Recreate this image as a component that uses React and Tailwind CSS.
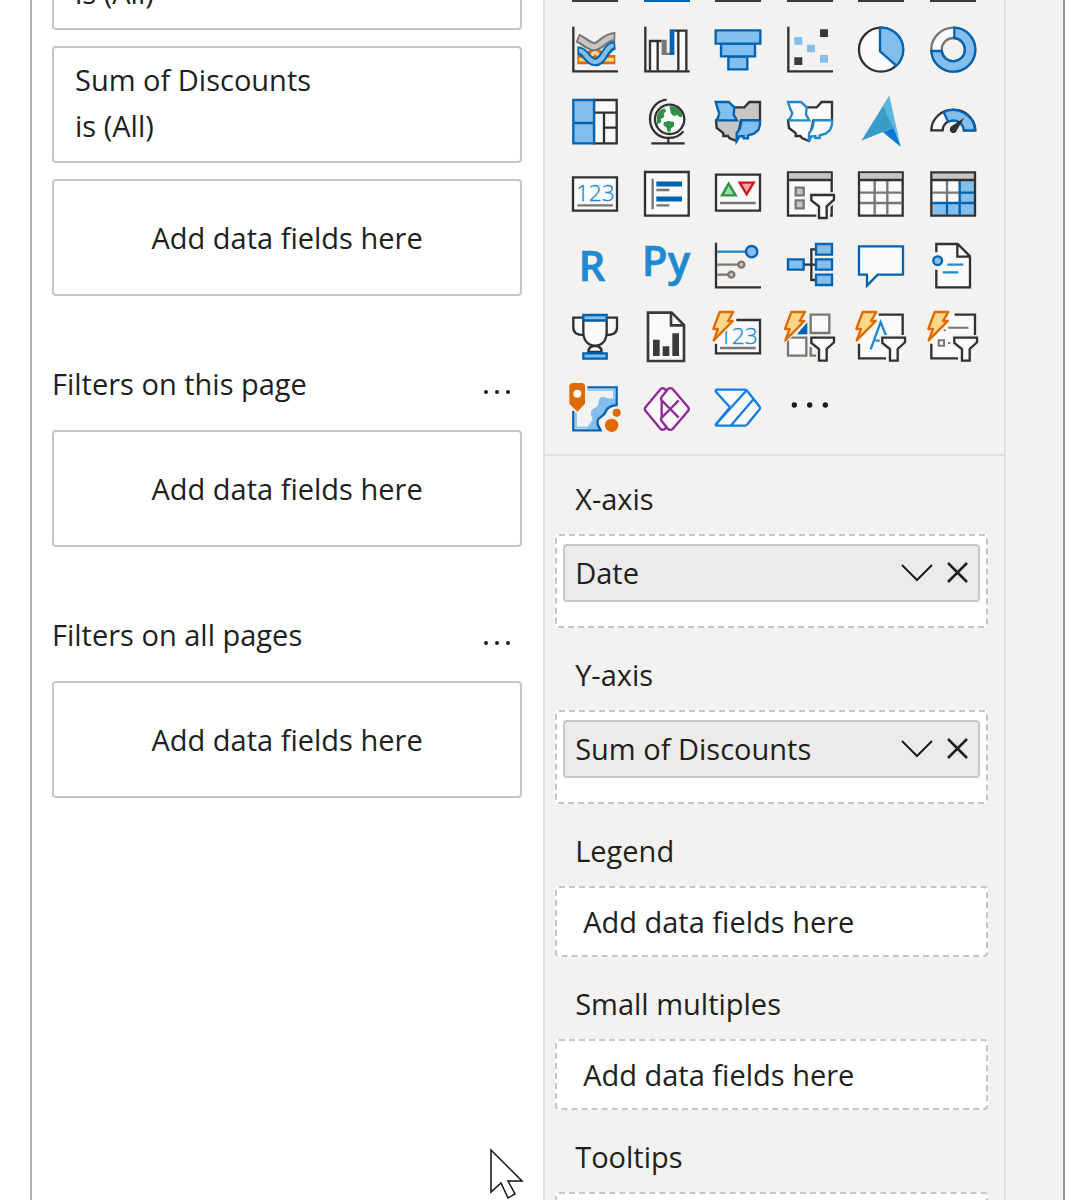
import React from 'react';

const INK = '#323130';
const BLUE = '#0063b1';
const SKY = '#83beec';
const PAPER = '#fafafa';
const GRAY = '#797673';
const SILVER = '#c8c6c4';
const AZURE = '#1f8ad0';

function Icon({ x, y, children }) {
  return (
    <svg viewBox={`${x} ${y} 162 162`} className="block size-[54px] overflow-visible" fill="none" strokeWidth="7" aria-hidden="true">
      {children}
    </svg>
  );
}

function Funnel({ x, y }) {
  return (
    <g transform={`translate(${x} ${y})`}>
      <path d="M4 4H72V18L52 38V73H27V38L4 20Z" fill={PAPER} stroke="#f3f2f1" strokeWidth="16" />
      <path d="M4 4H72V18L50 38V73H27V38L4 20Z" fill={PAPER} stroke={INK} />
    </g>
  );
}

function Bolt({ x, y }) {
  return (
    <g transform={`translate(${x} ${y})`} strokeLinejoin="round">
      <path d="M22 3H63L47 30H61L4 88L17 54H3Z" stroke="#f3f2f1" strokeWidth="14" />
      <path d="M22 3H63L47 30H61L4 88L17 54H3Z" fill="#fbd98a" stroke="#dd6b00" strokeWidth="7" />
    </g>
  );
}

const visuals = [
  {
    name: 'Ribbon chart',
    icon: (
      <Icon x={26} y={71}>
        <path d="M54 181H80L107 156L136 181H168" stroke="#dd6b00" strokeWidth="28" />
        <path d="M59 181H80L107 158L136 181H163" stroke="#fbd98a" strokeWidth="11" />
        <path d="M54 116C74 124 88 142 105 142C124 142 138 111 168 112" stroke={GRAY} strokeWidth="28" />
        <path d="M59 118C74 124 88 142 105 142C124 142 138 112 163 112" stroke={SILVER} strokeWidth="15" />
        <path d="M54 154C80 154 84 188 108 188C134 188 138 140 168 138" stroke={BLUE} strokeWidth="26" />
        <path d="M59 154C80 154 84 188 108 188C134 188 138 140 163 138" stroke={SKY} strokeWidth="13" />
        <path d="M42 82V216H176" stroke={INK} />
      </Icon>
    ),
  },
  {
    name: 'Waterfall chart',
    icon: (
      <Icon x={241} y={71}>
        <path d="M271 125H294V214H271ZM356 94H380V214H356Z" fill={PAPER} />
        <path d="M271 214V125H306M294 125V214M344 94H380V214M356 94V214" stroke={INK} />
        <path d="M306 121H321V160H331V167H306Z" fill={GRAY} />
        <path d="M330 90H344V167H330Z" fill={BLUE} />
        <path d="M257 82V216H390" stroke={INK} />
      </Icon>
    ),
  },
  {
    name: 'Funnel chart',
    icon: (
      <Icon x={455} y={71}>
        <g fill={SKY} stroke={BLUE}>
          <path d="M507 172H564V210H507Z" />
          <path d="M485 133H587V171H485Z" />
          <path d="M469 93H603V133H469Z" />
        </g>
      </Icon>
    ),
  },
  {
    name: 'Scatter chart',
    icon: (
      <Icon x={24} y={71}>
        <path d="M135 90h24v23h-24ZM58 174h24v23h-24Z" fill="#3b3a39" />
        <path d="M58 113h24v23h-24ZM96 136h24v23h-24ZM135 167h24v23h-24Z" fill={SKY} />
        <path d="M40 82V216H174" stroke={INK} />
      </Icon>
    ),
  },
  {
    name: 'Pie chart',
    icon: (
      <Icon x={238} y={71}>
        <circle cx="319" cy="151" r="66" fill={PAPER} stroke={INK} />
        <path d="M316 85A66 66 0 0 1 365 199L316 156Z" fill={SKY} stroke={BLUE} />
      </Icon>
    ),
  },
  {
    name: 'Donut chart',
    icon: (
      <Icon x={452} y={71}>
        <circle cx="534" cy="151" r="49" stroke={PAPER} strokeWidth="34" />
        <circle cx="534" cy="151" r="66" stroke={GRAY} />
        <circle cx="534" cy="151" r="35" stroke={GRAY} />
        <path d="M537 85A66 66 0 1 1 468 155H499A35 35 0 1 0 537 116Z" fill={SKY} stroke={BLUE} />
      </Icon>
    ),
  },
  {
    name: 'Treemap',
    icon: (
      <Icon x={26} y={286}>
        <path d="M104 301H172V431H104Z" fill={PAPER} stroke={INK} />
        <path d="M104 339H172M134 339V431M134 384H172" stroke={INK} />
        <path d="M42 301H104V431H42ZM42 370H104" fill={SKY} stroke={BLUE} />
      </Icon>
    ),
  },
  {
    name: 'Map',
    icon: (
      <Icon x={241} y={286}>
        <circle cx="330" cy="359" r="44" fill={PAPER} />
        <path d="M329 320C345 318 358 326 367 340V352H360L352 345C344 352 336 348 333 338ZM292 348C296 336 303 329 314 326L320 334L312 342L314 352L303 358L305 368L292 374ZM313 368L326 364L343 367V380L334 386L332 396H324L321 384L311 376Z" fill="#2d9148" />
        <circle cx="330" cy="359" r="44" stroke={INK} />
        <path d="M321 300C292 303 271 326 271 358C271 391 295 415 326 415C347 415 362 407 371 395M326 415V430M275 431H375" stroke={INK} />
      </Icon>
    ),
  },
  {
    name: 'Filled map',
    icon: (
      <Icon x={455} y={286}>
        <path d="M520 323H555L570 307H602V362H545L532 424L511 416L506 409H492V400L472 385L470 362Z" fill={SILVER} stroke={INK} />
        <path d="M469 307H508L525 323L523 345L533 362H473L480 341L475 328Z" fill={SKY} stroke={BLUE} />
        <path d="M547 362H602V375L597 391L584 402L566 407V416H553V409L540 410L532 424V401L542 386Z" fill={SKY} stroke={BLUE} />
      </Icon>
    ),
  },
  {
    name: 'Shape map',
    icon: (
      <Icon x={24} y={286}>
        <path d="M92 323H125L140 307H171V362H115L102 424L82 416L76 409H62V400L42 385L39 362Z" fill={PAPER} stroke={INK} />
        <path d="M39 307H78L95 323L93 345L103 362H43L52 341L46 328Z" fill={PAPER} stroke={AZURE} />
        <path d="M117 362H171V375L165 391L152 402L134 407V415H121V409L109 410L102 424V401L112 386Z" fill={PAPER} stroke={AZURE} />
      </Icon>
    ),
  },
  {
    name: 'Azure map',
    icon: (
      <Icon x={238} y={286}>
        <path d="M344 288L260 423L325 397Z" fill="#3a9bc9" />
        <path d="M344 288L378 441L325 320Z" fill="#5cb8dc" />
        <path d="M325 320L356 385L325 398Z" fill="#3a9bc9" />
        <path d="M325 398L356 385L378 441Z" fill="#0078d4" />
      </Icon>
    ),
  },
  {
    name: 'Gauge',
    icon: (
      <Icon x={452} y={286}>
        <path d="M468 392A66 62 0 0 1 600 392H566A32 30 0 0 0 502 392Z" fill={PAPER} stroke={INK} />
        <path d="M505 337A66 62 0 0 1 599 392H566C564 376 552 362 534 362C528 362 523 363 518 366Z" fill={SKY} stroke={BLUE} />
        <path d="M567 354L545 391A11 11 0 1 1 528 380Z" fill={INK} />
      </Icon>
    ),
  },
  {
    name: 'Card',
    icon: (
      <Icon x={26} y={49}>
        <path d="M41 80H173V180H41Z" fill={PAPER} stroke={INK} />
        <text x="108" y="152" textAnchor="middle" fontSize="68" fontFamily="'Open Sans', sans-serif" fontWeight="300" fill={AZURE} stroke={AZURE} strokeWidth="1">123</text>
        <path d="M54 164H161" stroke={GRAY} />
      </Icon>
    ),
  },
  {
    name: 'Multi-row card',
    icon: (
      <Icon x={241} y={49}>
        <path d="M256 64H387V195H256Z" fill={PAPER} stroke={INK} />
        <path d="M279 84V176M290 118H329M290 164H329" stroke={GRAY} />
        <path d="M290 100H367M290 145H367" stroke={BLUE} strokeWidth="15" />
      </Icon>
    ),
  },
  {
    name: 'KPI',
    icon: (
      <Icon x={455} y={49}>
        <path d="M470 72H602V180H470Z" fill={PAPER} stroke={INK} />
        <path d="M508 99L529 134H488Z" fill="#a1dba8" stroke="#2d9148" />
        <path d="M541 96H583L562 131Z" fill="#f5a3a5" stroke="#d1141b" />
        <path d="M482 157H589" stroke={GRAY} />
      </Icon>
    ),
  },
  {
    name: 'Slicer',
    icon: (
      <Icon x={24} y={49}>
        <path d="M39 65H170V195H39Z" fill={PAPER} stroke={INK} />
        <path d="M42 68H167V85H42Z" fill={SILVER} />
        <path d="M39 88H170" stroke={INK} />
        <path d="M62 111H86V134H62ZM62 149H86V173H62Z" fill={SILVER} stroke={GRAY} />
        <Funnel x={105} y={129} />
      </Icon>
    ),
  },
  {
    name: 'Table',
    icon: (
      <Icon x={238} y={49}>
        <path d="M253 65H384V195H253Z" fill={PAPER} stroke={INK} />
        <path d="M256 68H381V85H256Z" fill={SILVER} />
        <path d="M300 88V192M338 88V192M256 126H381M256 157H381" stroke={GRAY} />
        <path d="M253 88H384" stroke={INK} />
      </Icon>
    ),
  },
  {
    name: 'Matrix',
    icon: (
      <Icon x={452} y={49}>
        <path d="M468 65H599V195H468Z" fill={PAPER} />
        <path d="M471 68H596V85H471Z" fill={SILVER} />
        <path d="M553 90H596V192H471V160H553Z" fill={SKY} />
        <path d="M515 88V157M471 126H553" stroke={GRAY} />
        <path d="M553 88V192M515 157V192M471 157H596M553 126H596" stroke={BLUE} />
        <path d="M468 65H599V195H468ZM468 88H599" stroke={INK} />
      </Icon>
    ),
  },
  {
    name: 'R script visual',
    icon: (
      <Icon x={26} y={264}>
        <text x="98" y="389" textAnchor="middle" fontSize="126" fontFamily="'Open Sans', sans-serif" fontWeight="600" fill={AZURE} stroke={AZURE} strokeWidth="2">R</text>
      </Icon>
    ),
  },
  {
    name: 'Python visual',
    icon: (
      <Icon x={241} y={264}>
        <text x="319" y="375" textAnchor="middle" fontSize="126" fontFamily="'Open Sans', sans-serif" fontWeight="600" fill={AZURE} stroke={AZURE} strokeWidth="2">Py</text>
      </Icon>
    ),
  },
  {
    name: 'Key influencers',
    icon: (
      <Icon x={455} y={264}>
        <path d="M474 341H540M474 371H510" stroke={GRAY} />
        <path d="M474 302H562" stroke={AZURE} />
        <circle cx="577" cy="302" r="17" fill={SKY} stroke={BLUE} />
        <circle cx="546" cy="341" r="9" fill={SILVER} stroke={GRAY} />
        <circle cx="516" cy="371" r="9" fill={SILVER} stroke={GRAY} />
        <path d="M470 275V409H605" stroke={INK} />
      </Icon>
    ),
  },
  {
    name: 'Decomposition tree',
    icon: (
      <Icon x={24} y={264}>
        <path d="M88 341H124M124 295H109V387H124" stroke={INK} />
        <path d="M39 325H86V356H39ZM123 279H171V311H123ZM123 325H171V356H123ZM123 371H171V402H123Z" fill={SKY} stroke={BLUE} />
      </Icon>
    ),
  },
  {
    name: 'Q&A',
    icon: (
      <Icon x={238} y={264}>
        <path d="M253 286H385V371H309L277 404V371H253Z" fill={PAPER} stroke={BLUE} />
      </Icon>
    ),
  },
  {
    name: 'Smart narrative',
    icon: (
      <Icon x={452} y={264}>
        <path d="M483 279H547L584 316V409H483Z" fill={PAPER} />
        <path d="M483 304V279H547L584 316V409H483V356M546 279V317H584" stroke={INK} />
        <circle cx="487" cy="329" r="22" fill="#f3f2f1" />
        <circle cx="487" cy="329" r="13" fill={SKY} stroke={BLUE} />
        <path d="M516 341H564M502 364H549" stroke={AZURE} />
      </Icon>
    ),
  },
  {
    name: 'Metrics',
    icon: (
      <Icon x={26} y={29}>
        <path d="M87 155C87 142 94 137 107 137C120 137 127 142 127 155Z" fill={PAPER} stroke={INK} />
        <path d="M72 52H42V82C42 96 52 104 74 104M143 52H173V82C173 96 162 104 140 104" fill={PAPER} stroke={INK} />
        <path d="M72 60V96C72 122 88 136 107 136C127 136 142 122 142 96V60Z" fill={PAPER} stroke={INK} />
        <path d="M72 44H142V60H72ZM72 159H142V175H72Z" fill={SKY} stroke={BLUE} />
      </Icon>
    ),
  },
  {
    name: 'Paginated report',
    icon: (
      <Icon x={241} y={29}>
        <path d="M265 37H336L373 74V182H265Z" fill={PAPER} stroke="#3b3a39" strokeWidth="8" />
        <path d="M334 37V75H373" stroke="#3b3a39" strokeWidth="8" />
        <path d="M280 118h20v49h-20ZM309 138h20v29h-20ZM338 99h20v68h-20Z" fill="#3b3a39" />
      </Icon>
    ),
  },
  {
    name: 'New card',
    icon: (
      <Icon x={455} y={29}>
        <path d="M470 59H602V159H470Z" fill={PAPER} />
        <path d="M531 59H602V159H470V130" stroke={INK} />
        <text x="537" y="131" textAnchor="middle" fontSize="68" fontFamily="'Open Sans', sans-serif" fontWeight="300" fill={AZURE} stroke={AZURE} strokeWidth="1">123</text>
        <path d="M482 143H589" stroke={GRAY} />
        <Bolt x={459} y={32} />
      </Icon>
    ),
  },
  {
    name: 'Button slicer',
    icon: (
      <Icon x={24} y={29}>
        <path d="M107 43H163V98H107ZM39 112H94V166H39Z" fill={PAPER} stroke={GRAY} />
        <path d="M124 166H107V140" stroke={GRAY} />
        <path d="M97 66V102H66Z" fill={BLUE} />
        <Bolt x={27} y={32} />
        <Funnel x={105} y={108} />
      </Icon>
    ),
  },
  {
    name: 'Text slicer',
    icon: (
      <Icon x={238} y={29}>
        <path d="M253 43H384V174H253Z" fill={PAPER} />
        <path d="M312 43H384V110M253 130V174H334" stroke={INK} />
        <path d="M288 147L318 65L338 116M302 121H320" stroke={AZURE} />
        <Bolt x={242} y={32} />
        <Funnel x={319} y={108} />
      </Icon>
    ),
  },
  {
    name: 'List slicer',
    icon: (
      <Icon x={452} y={29}>
        <path d="M468 43H599V174H468Z" fill={PAPER} />
        <path d="M538 43H599V110M468 130V174H548" stroke={INK} />
        <path d="M518 82H579M505 90H511M518 128H525M490 120H506V136H490Z" stroke={GRAY} strokeWidth="6" />
        <Bolt x={456} y={32} />
        <Funnel x={533} y={108} />
      </Icon>
    ),
  },
  {
    name: 'ArcGIS Maps',
    icon: (
      <Icon x={26} y={243}>
        <path d="M46 262H168V310L140 322L115 352L122 386H46Z" fill="#f3f2f1" />
        <path d="M168 290C155 296 140 290 130 287C116 290 119 303 116 313C108 325 92 322 95 342C108 358 86 368 84 384H121C108 352 125 356 133 342C138 325 150 316 170 314Z" fill={SKY} />
        <path d="M84 259H172V312C155 314 142 321 139 332C133 350 113 348 115 361C112 374 121 380 124 388H42V330" stroke={BLUE} />
        <path d="M84 267H164V292M50 335V380H88" stroke={SKY} strokeWidth="5" />
        <path d="M37 246H70L77 252V308L54 332L30 308V252Z" fill="#dd6b00" />
        <circle cx="54" cy="278" r="12" fill={PAPER} />
        <circle cx="172" cy="335" r="12" fill="#dd6b00" />
        <circle cx="157" cy="373" r="20" fill="#dd6b00" />
      </Icon>
    ),
  },
  {
    name: 'Power Apps',
    icon: (
      <Icon x={241} y={243}>
        <g fill={PAPER} stroke="#8f2a9b" strokeLinejoin="round">
          <path d="M303 264Q310 259 318 266L320 274L306 300V348L320 374L318 382Q310 389 303 384L258 330Q253 324 258 318Z" />
          <path d="M325 264Q332 259 339 264L385 318Q390 324 385 330L339 384Q332 389 325 384L306 360Q302 355 306 350L332 324L306 298Q302 293 306 288Z" />
          <path d="M357 350L332 324L357 298" fill="none" />
        </g>
      </Icon>
    ),
  },
  {
    name: 'Power Automate',
    icon: (
      <Icon x={455} y={243}>
        <g fill={PAPER} stroke="#0f7fe6" strokeLinejoin="round">
          <path d="M473 266H557Q561 266 564 270L601 317Q604 321 601 325L564 370Q561 374 557 374H473Q466 374 471 368L512 319L470 273Q467 266 473 266Z" />
          <path d="M470 370L562 268M514 374L583 294" fill="none" />
        </g>
      </Icon>
    ),
  },
  {
    name: 'Get more visuals',
    icon: (
      <Icon x={24} y={243}>
        <g fill="#1b1a19">
          <circle cx="58" cy="312" r="8" />
          <circle cx="104" cy="312" r="8" />
          <circle cx="151" cy="312" r="8" />
        </g>
      </Icon>
    ),
  },
];

const cutRow = ['bg-[#3b3a39]', 'bg-[#0063b1]', 'bg-[#3b3a39]', 'bg-[#3b3a39]', 'bg-[#3b3a39]', 'bg-[#3b3a39]'];

function FilterCard({ field, condition }) {
  return (
    <div className="rounded-[4px] border-2 border-[#c8c6c4] px-[21px] pt-[9px] pb-3 leading-[46px]">
      <div>{field}</div>
      <div>{condition}</div>
    </div>
  );
}

function DropArea() {
  return (
    <div className="flex h-[117px] items-center justify-center rounded-[4px] border-2 border-[#c8c6c4]">
      Add data fields here
    </div>
  );
}

function FilterSection({ title }) {
  return (
    <section className="mt-[68px]">
      <div className="mb-[26px] flex items-center justify-between">
        <h2>{title}</h2>
        <button type="button" aria-label={`More options: ${title}`} className="mr-2 flex h-10 w-8 items-center justify-center">
          <svg viewBox="0 0 32 40" className="h-10 w-8" fill="#201f1e" aria-hidden="true">
            <circle cx="4" cy="28" r="2" />
            <circle cx="15" cy="28" r="2" />
            <circle cx="26" cy="28" r="2" />
          </svg>
        </button>
      </div>
      <DropArea />
    </section>
  );
}

function FieldWell({ label, field }) {
  return (
    <section className="pt-[27px]">
      <h3 className="mb-[15px] pl-5">{label}</h3>
      {field ? (
        <div className="rounded-[4px] border-2 border-dashed border-[#c8c6c4] bg-white px-1.5 pt-2 pb-6">
          <div className="flex h-[58px] items-center rounded-[4px] border-2 border-[#c8c6c4] bg-[#edebe9] px-2.5">
            <span className="flex-1">{field}</span>
            <button type="button" aria-label={`${field} options`} className="mr-3.5">
              <svg viewBox="0 0 32 22" className="block h-[22px] w-8" fill="none" stroke="#201f1e" strokeWidth="2" aria-hidden="true">
                <path d="M1 3L16 18L31 3" />
              </svg>
            </button>
            <button type="button" aria-label={`Remove ${field}`}>
              <svg viewBox="0 0 21 22" className="block h-[22px] w-[21px]" fill="none" stroke="#201f1e" strokeWidth="2.5" aria-hidden="true">
                <path d="M1 1L20 20M20 1L1 20" />
              </svg>
            </button>
          </div>
        </div>
      ) : (
        <div className="flex h-[71px] items-center rounded-[4px] border-2 border-dashed border-[#c8c6c4] bg-white pl-[26px]">
          Add data fields here
        </div>
      )}
    </section>
  );
}

export default function App() {
  return (
    <div className="relative flex h-screen overflow-hidden bg-white font-['Open_Sans',sans-serif] text-[29px] leading-10 text-[#201f1e]">
      <aside className="ml-[30px] flex-1 border-l-2 border-[#b3b0ad] pr-[21px] pl-5">
        <div className="-mt-[87px] flex flex-col gap-4">
          <FilterCard field="Date" condition="is (All)" />
          <FilterCard field="Sum of Discounts" condition="is (All)" />
          <DropArea />
        </div>
        <FilterSection title="Filters on this page" />
        <FilterSection title="Filters on all pages" />
      </aside>

      <main className="flex w-[49%] bg-[#f3f2f1]">
        <div className="flex-1 border-x-2 border-[#e1dfdd]">
          <div className="border-b-2 border-[#e1dfdd] pr-[7px] pl-[23px]">
            <div className="grid grid-cols-6">
              {cutRow.map((tone, i) => (
                <div key={i} className={`ml-1 h-0.5 w-[46px] ${tone}`} />
              ))}
            </div>
            <div className="mt-[21px] grid h-[431px] grid-cols-6 grid-rows-6">
              {visuals.map((v) => (
                <button key={v.name} type="button" aria-label={v.name} className="size-[54px]">
                  {v.icon}
                </button>
              ))}
            </div>
          </div>
          <div className="-mt-1 pr-4 pl-2.5">
            <FieldWell label="X-axis" field="Date" />
            <FieldWell label="Y-axis" field="Sum of Discounts" />
            <FieldWell label="Legend" />
            <FieldWell label="Small multiples" />
            <FieldWell label="Tooltips" />
          </div>
        </div>
        <div className="w-[59px] border-r-2 border-[#979593]" />
      </main>

      <svg viewBox="0 0 36 52" className="absolute top-[1148px] left-[489px] h-[52px] w-9" fill="white" stroke="#111111" strokeWidth="1.5" aria-hidden="true">
        <path d="M2 2V44L12 35L19 50L26 46L19 33H33Z" />
      </svg>
    </div>
  );
}
